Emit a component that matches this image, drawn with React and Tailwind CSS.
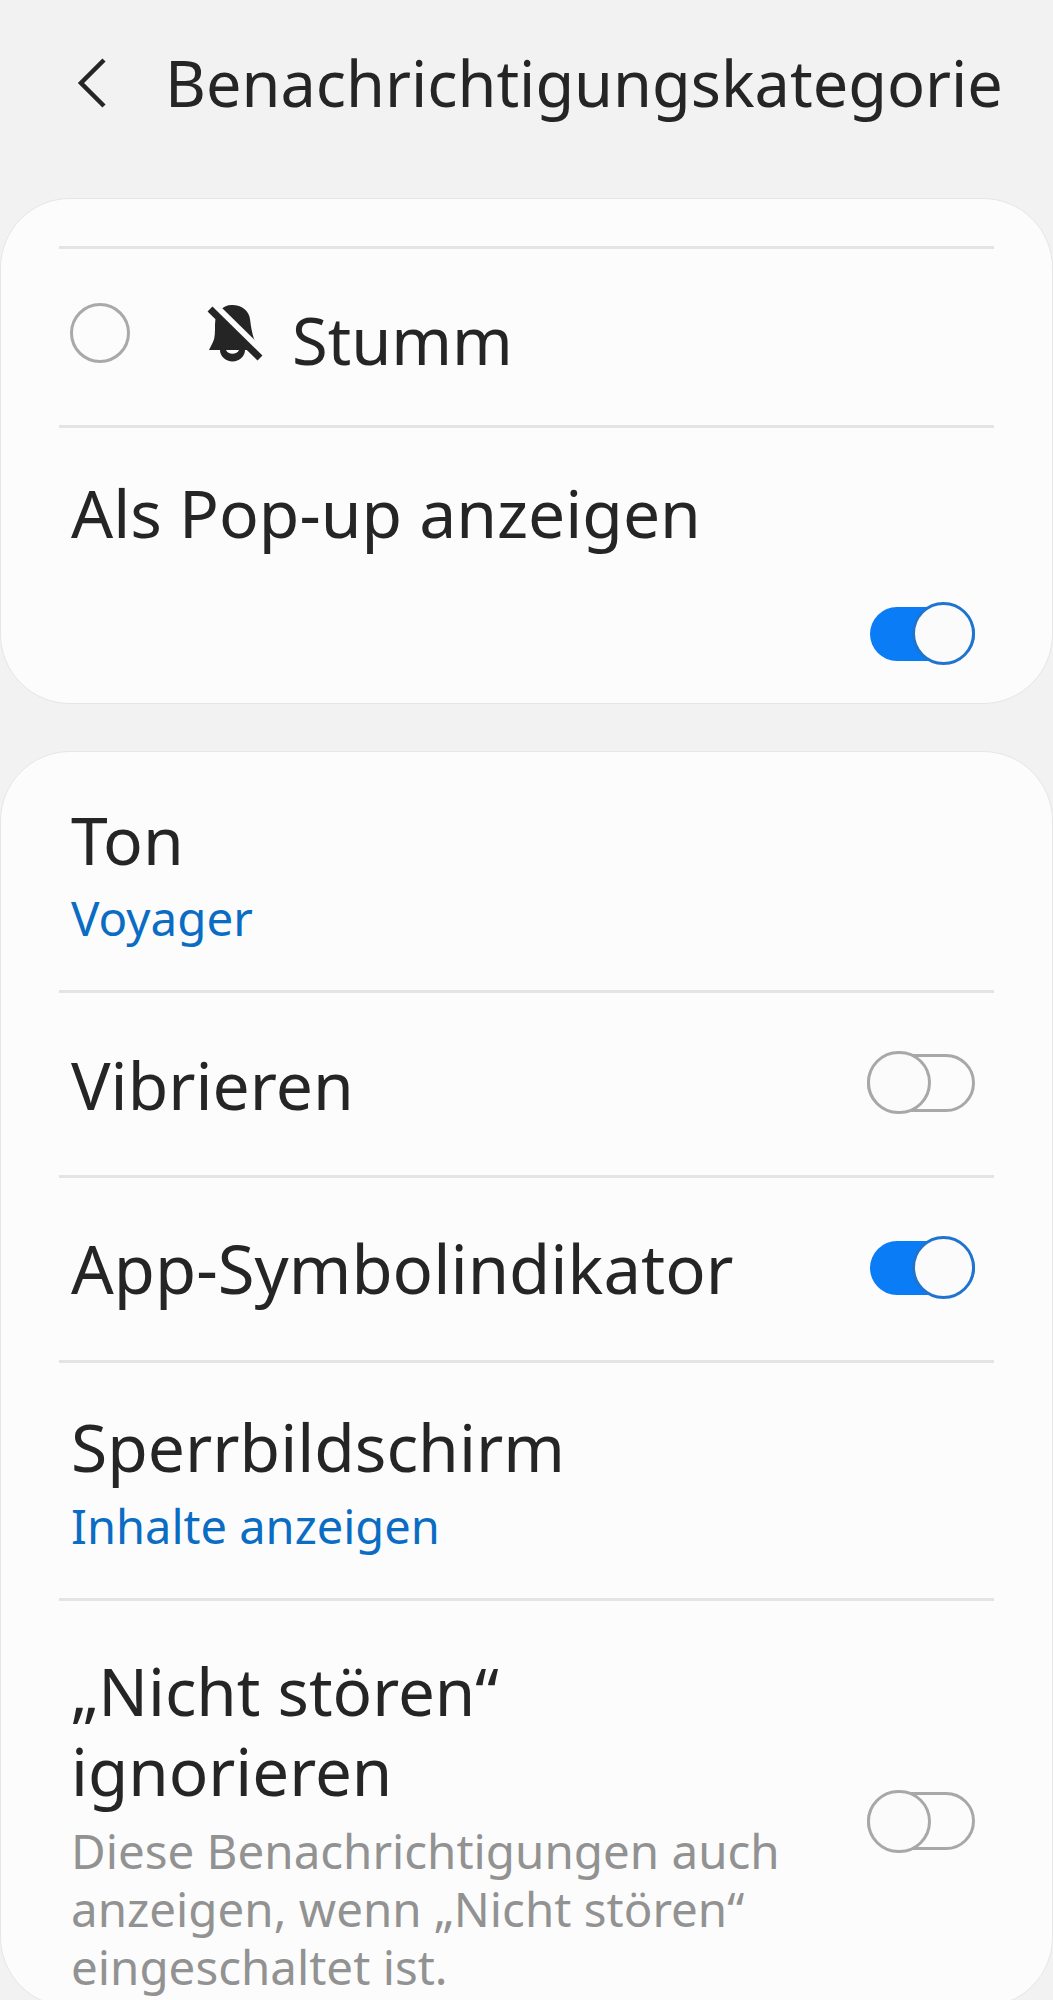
import React from 'react';

function Toggle({ on }) {
  if (on) {
    return (
      <div className="relative w-[105px] h-[63px] shrink-0 flex items-center">
        <div className="w-[105px] h-[54px] rounded-full bg-[#0a7cf5]" />
        <div className="absolute right-0 top-0 w-[63px] h-[63px] rounded-full bg-[#fbfbfb] border-[3px] border-[#1f74d0]" />
      </div>
    );
  }
  return (
    <div className="relative w-[108px] h-[63px] shrink-0 flex items-center">
      <div className="w-[108px] h-[58px] rounded-full border-[3px] border-[#a8a8a8]" />
      <div className="absolute left-0 top-0 w-[64px] h-[63px] rounded-full bg-[#fbfbfb] border-[3px] border-[#a8a8a8]" />
    </div>
  );
}

function Divider() {
  return <div className="mx-[58px] h-[3px] bg-[#e4e4e4]" />;
}

function MutedBell() {
  return (
    <svg width="56" height="60" viewBox="0 0 56 60" className="shrink-0">
      <path d="M25 2c10 0 17 6 18 14 1 8 2 14 4 20l7 11H2l4-8c2-4 2-10 2-17C8 10 15 2 25 2z" fill="#252525" />
      <path d="M13 47a12 11 0 0 0 25 0h-6a7 6 0 0 1-13 0z" fill="#252525" />
      <path d="M7 2L56 50" stroke="#fcfcfc" strokeWidth="7" />
      <path d="M3 6L53 55" stroke="#252525" strokeWidth="7" />
    </svg>
  );
}

export default function App() {
  return (
    <div className="w-[1053px] h-[2000px] overflow-hidden bg-[#f2f2f2] text-[#252525] font-['Noto_Sans','Open_Sans',sans-serif]">
      <header className="h-[198px] flex items-start pt-[43px]">
        <svg width="32" height="50" viewBox="0 0 32 50" className="ml-[76px] mt-[15px] shrink-0" fill="none" stroke="#252525" strokeWidth="4.5">
          <path d="M28 2L5 25l23 23" />
        </svg>
        <h1 className="ml-[57px] text-[63px] leading-[80px] whitespace-nowrap">Benachrichtigungskategorie</h1>
      </header>

      <section className="h-[506px] bg-[#fcfcfc] rounded-[70px] border border-[#e6e6e6] pt-[47px]">
        <Divider />
        <div className="h-[176px] flex items-start pl-[70px]">
          <div className="-ml-px mt-[54px] w-[60px] h-[60px] rounded-full border-[3px] border-[#a9a9a9] shrink-0" />
          <div className="ml-[77px] mt-[54px]"><MutedBell /></div>
          <div className="ml-[29px] mt-[49px] text-[65px] leading-[84px]">Stumm</div>
        </div>
        <Divider />
        <div className="pl-[70px] pr-[77px] pt-[42px]">
          <div className="text-[66px] leading-[84px]">Als Pop-up anzeigen</div>
          <div className="flex justify-end mt-[48px]"><Toggle on /></div>
        </div>
      </section>

      <section className="mt-[47px] h-[1256px] bg-[#fcfcfc] rounded-[70px] border border-[#e6e6e6] overflow-hidden">
        <div className="h-[238px] pl-[70px] pt-[45px]">
          <div className="text-[66px] leading-[84px]">Ton</div>
          <div className="mt-[7px] text-[47.5px] leading-[60px] text-[#0b6cc4]">Voyager</div>
        </div>
        <Divider />
        <div className="h-[182px] flex items-center justify-between pl-[70px] pr-[77px]">
          <div className="text-[66px] leading-[84px]">Vibrieren</div>
          <div className="mb-[3px]"><Toggle /></div>
        </div>
        <Divider />
        <div className="h-[182px] flex items-center justify-between pl-[70px] pr-[77px]">
          <div className="mb-[2px] text-[67px] leading-[84px]">App-Symbolindikator</div>
          <div className="mb-[3px]"><Toggle on /></div>
        </div>
        <Divider />
        <div className="h-[235px] pl-[70px] pt-[41px]">
          <div className="text-[66px] leading-[84px]">Sperrbildschirm</div>
          <div className="mt-[8px] text-[47px] leading-[60px] text-[#0b6cc4]">Inhalte anzeigen</div>
        </div>
        <Divider />
        <div className="flex items-center justify-between pl-[70px] pr-[77px] pt-[50px]">
          <div className="w-[740px]">
            <div className="text-[65.5px] leading-[80px]">„Nicht stören“<br />ignorieren</div>
            <div className="mt-[11px] text-[47.5px] leading-[58px] text-[#929292]">Diese Benachrichtigungen auch anzeigen, wenn „Nicht stören“ eingeschaltet ist.</div>
          </div>
          <div className="mb-[5px]"><Toggle /></div>
        </div>
      </section>
    </div>
  );
}
